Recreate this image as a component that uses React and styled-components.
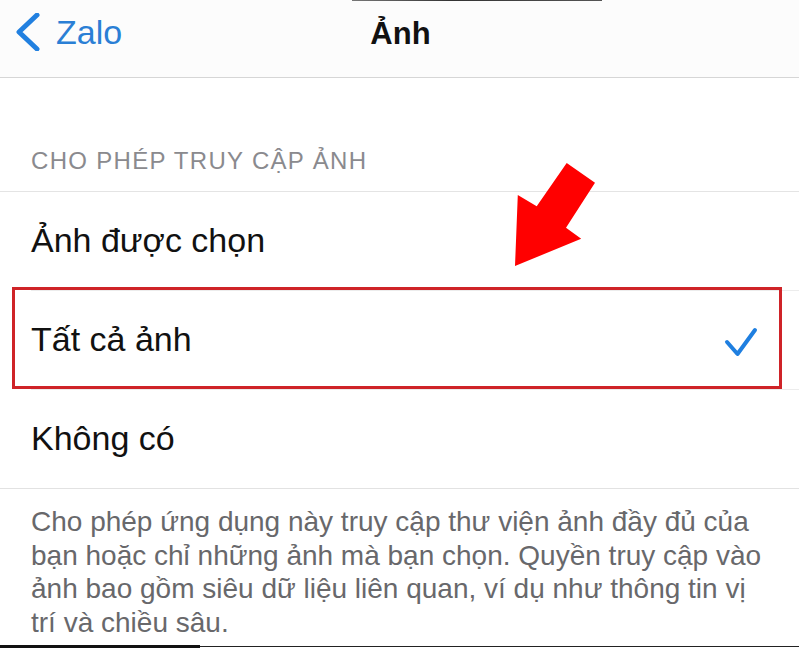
import React from "react";
import styled, { createGlobalStyle } from "styled-components";

const Global = createGlobalStyle`
  html, body { margin: 0; padding: 0; background: #ffffff; }
  body { font-family: "Liberation Sans", Arial, Helvetica, sans-serif; }
  * { box-sizing: border-box; }
`;

const Page = styled.div`
  position: relative;
  width: 799px;
  height: 649px;
  overflow: hidden;
  background: #ffffff;
  display: flex;
  flex-direction: column;
`;

const NavBar = styled.header`
  position: relative;
  height: 78px;
  padding: 12px 0 0 14px;
  background: #fcfcfc;
  border-bottom: 1px solid #d6d6d6;
  display: grid;
  grid-template-columns: 1fr auto 1fr;
  align-items: start;
  &::before {
    content: "";
    position: absolute;
    top: 0;
    left: 352px;
    width: 250px;
    height: 1px;
    background: linear-gradient(90deg, #777, #333 40%, #555);
  }
`;

const BackButton = styled.div`
  display: flex;
  align-items: center;
  gap: 16px;
  color: #2a7fd5;
  font-size: 34px;
  line-height: 40px;
`;

const Title = styled.h1`
  margin: 4px 0 0 0;
  font-size: 31px;
  line-height: 36px;
  font-weight: 700;
  color: #111111;
  transform: translateX(-6px);
`;

const SectionHeader = styled.div`
  padding: 69px 0 16px 31px;
  font-size: 24px;
  line-height: 28px;
  letter-spacing: 1.3px;
  color: #8a8a8e;
  text-transform: uppercase;
  border-bottom: 1px solid #e4e4e4;
`;

const List = styled.div`
  display: flex;
  flex-direction: column;
  border-bottom: 1px solid #e2e2e2;
`;

const Row = styled.div`
  position: relative;
  height: ${(p) => (p.$last ? "98px" : "99px")};
  padding: 28px 41px 0 31px;
  display: flex;
  justify-content: space-between;
  align-items: flex-start;
  font-size: 34px;
  line-height: 40px;
  color: #111111;
  &::after {
    content: "";
    display: ${(p) => (p.$last ? "none" : "block")};
    position: absolute;
    left: 31px;
    right: 0;
    bottom: 0;
    height: 1px;
    background: #ececec;
  }
`;

const Check = styled.svg`
  width: 34px;
  height: 30px;
  margin-top: 8px;
`;

const Highlight = styled.span`
  position: absolute;
  top: -4px;
  bottom: 1px;
  left: 12px;
  right: 17px;
  border: 3px solid #cf2328;
  pointer-events: none;
  z-index: 1;
`;

const Footnote = styled.p`
  margin: 0;
  padding: 16px 30px 0 31px;
  font-size: 28px;
  line-height: 33.7px;
  color: #68686b;
`;

const Arrow = styled.svg`
  position: absolute;
  left: 510px;
  top: 160px;
  width: 90px;
  height: 110px;
  overflow: visible;
`;

const EdgeLine = styled.div`
  position: absolute;
  left: 0;
  right: 0;
  bottom: 2px;
  height: 1px;
  background: #222;
  &::before {
    content: "";
    position: absolute;
    left: 0;
    bottom: -1px;
    width: 200px;
    height: 3px;
    background: #111;
  }
`;

const options = [
  { label: "Ảnh được chọn" },
  { label: "Tất cả ảnh", selected: true },
  { label: "Không có" },
];

export default function App() {
  return (
    <Page>
      <Global />
      <NavBar>
        <BackButton>
          <svg width="26" height="38" viewBox="0 0 26 38">
            <path
              d="M23 2 L5 19 L23 36"
              fill="none"
              stroke="#2180e0"
              strokeWidth="5"
              strokeLinecap="round"
              strokeLinejoin="round"
            />
          </svg>
          <span>Zalo</span>
        </BackButton>
        <Title>Ảnh</Title>
        <div />
      </NavBar>
      <SectionHeader>Cho phép truy cập ảnh</SectionHeader>
      <List>
        {options.map((o, i) => (
          <Row key={o.label} $last={i === options.length - 1}>
            <span>{o.label}</span>
            {o.selected && (
              <>
                <Check viewBox="0 0 34 30">
                  <path
                    d="M3 15 L13.5 27 L31 3"
                    fill="none"
                    stroke="#1f7fe0"
                    strokeWidth="4"
                    strokeLinecap="round"
                    strokeLinejoin="round"
                  />
                </Check>
                <Highlight />
              </>
            )}
          </Row>
        ))}
      </List>
      <Footnote>
        Cho phép ứng dụng này truy cập thư viện ảnh đầy đủ của bạn hoặc chỉ
        những ảnh mà bạn chọn. Quyền truy cập vào ảnh bao gồm siêu dữ liệu
        liên quan, ví dụ như thông tin vị trí và chiều sâu.
      </Footnote>
      <Arrow viewBox="0 0 90 110">
        <polygon
          points="56.7,3 85,22.8 56,67.8 71.2,78.8 5,106 7.8,35 26.7,46.2"
          fill="#ff0000"
        />
      </Arrow>
      <EdgeLine />
    </Page>
  );
}
